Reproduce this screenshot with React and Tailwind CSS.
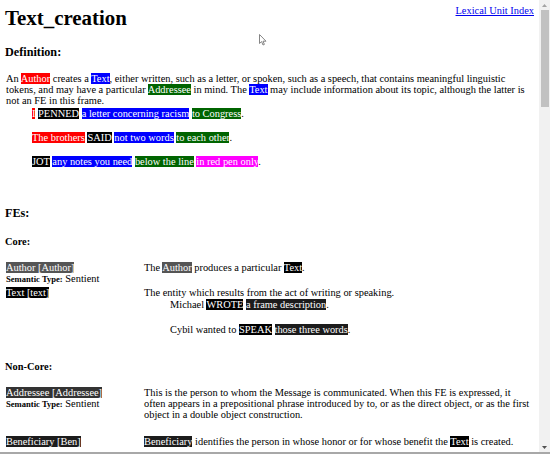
import React from 'react'

// FE highlight
function Hl({ c, children }) {
  return <span className={`${c} text-white`}>{children}</span>
}

const RED = 'bg-[#ff0000]'
const BLUE = 'bg-[#0000ff]'
const GREEN = 'bg-[#006400]'
const PINK = 'bg-[#ff00ff]'
const BLACK = 'bg-[#000000]'
const GRAY = 'bg-[#555555]'
const DARK = 'bg-[#333333]'
const DARKER = 'bg-[#1c1c1c]'

function Scrollbar() {
  return (
    <div className="w-[11px] shrink-0 bg-[#f1f1f1] flex flex-col items-center">
      <div className="h-[10px] w-full flex items-center justify-center">
        <svg width="5" height="3" viewBox="0 0 5 3">
          <path d="M0 3 L2.5 0 L5 3 Z" fill="#a3a3a3" />
        </svg>
      </div>
      <div className="w-[8px] h-[97px] bg-[#c1c1c1]" />
      <div className="flex-1" />
      <div className="h-[10px] w-full flex items-center justify-center">
        <svg width="5" height="3" viewBox="0 0 5 3">
          <path d="M0 0 L2.5 3 L5 0 Z" fill="#505050" />
        </svg>
      </div>
    </div>
  )
}

function FeRow({ label, semantic, children }) {
  return (
    <>
      <div className="pl-px">
        <div>{label}</div>
        {semantic && (
          <div>
            <b className="text-[8.6px]">Semantic Type:</b> Sentient
          </div>
        )}
      </div>
      <div className="pb-[11.5px]">{children}</div>
    </>
  )
}

export default function App() {
  return (
    <div className="relative h-[454px] w-[550px] overflow-hidden bg-white text-black font-['Liberation_Serif',serif] text-[10.4px] leading-[normal] flex flex-col">
      <div className="flex flex-1 min-h-0">
        <main className="flex-1 min-w-0 overflow-hidden px-[5px] pt-[5px]">
          {/* header */}
          <div className="flex items-start justify-between">
            <h1 className="mt-[1px] text-[20.9px] font-bold">Text_creation</h1>
            <a href="#" className="text-[#0000ee] underline">Lexical Unit Index</a>
          </div>

          <h3 className="mt-[14px] text-[12.2px] font-bold">Definition:</h3>

          <div className="mt-[12.6px] pl-[1px]">
            <p>
              An <Hl c={RED}>Author</Hl> creates a <Hl c={BLUE}>Text</Hl>, either written, such as a letter, or spoken, such as a speech, that contains meaningful linguistic tokens, and may have a particular <Hl c={GREEN}>Addressee</Hl> in mind. The <Hl c={BLUE}>Text</Hl> may include information about its topic, although the latter is not an FE in this frame.
            </p>
            <div className="mt-[2px] ml-[26px] flex flex-col gap-[13px]">
              <div>
                <Hl c={RED}>I</Hl> <Hl c={BLACK}>PENNED</Hl> <Hl c={BLUE}>a letter concerning racism</Hl> <Hl c={GREEN}>to Congress</Hl>.
              </div>
              <div>
                <Hl c={RED}>The brothers</Hl> <Hl c={BLACK}>SAID</Hl> <Hl c={BLUE}>not two words</Hl> <Hl c={GREEN}>to each other</Hl>.
              </div>
              <div>
                <Hl c={BLACK}>JOT</Hl> <Hl c={BLUE}>any notes you need</Hl> <Hl c={GREEN}>below the line</Hl> <Hl c={PINK}>in red pen only</Hl>.
              </div>
            </div>
          </div>

          <h3 className="mt-[39px] text-[12.2px] font-bold">FEs:</h3>

          <h4 className="mt-[15.6px] font-bold">Core:</h4>

          <div className="mt-[14.6px] grid grid-cols-[139px_1fr] gap-y-[3px]">
            <FeRow label={<Hl c={GRAY}>Author [Author]</Hl>} semantic>
              The <Hl c={GRAY}>Author</Hl> produces a particular <Hl c={BLACK}>Text</Hl>.
            </FeRow>
            <FeRow label={<Hl c={BLACK}>Text [text]</Hl>}>
              <div>The entity which results from the act of writing or speaking.</div>
              <div className="mt-[1px] ml-[26px] flex flex-col gap-[13.4px]">
                <div>
                  Michael <Hl c={BLACK}>WROTE</Hl> <Hl c={DARKER}>a frame description</Hl>.
                </div>
                <div>
                  Cybil wanted to <Hl c={BLACK}>SPEAK</Hl> <Hl c={DARKER}>those three words</Hl>.
                </div>
              </div>
            </FeRow>
          </div>

          <h4 className="mt-[15px] font-bold">Non-Core:</h4>

          <div className="mt-[14.5px] grid grid-cols-[139px_1fr] gap-y-[5px]">
            <FeRow label={<Hl c={DARK}>Addressee [Addressee]</Hl>} semantic>
              This is the person to whom the Message is communicated. When this FE is expressed, it often appears in a prepositional phrase introduced by to, or as the direct object, or as the first object in a double object construction.
            </FeRow>
            <FeRow label={<Hl c={DARKER}>Beneficiary [Ben]</Hl>}>
              <Hl c={DARKER}>Beneficiary</Hl> identifies the person in whose honor or for whose benefit the <Hl c={BLACK}>Text</Hl> is created.
            </FeRow>
          </div>
        </main>
        <Scrollbar />
      </div>
      <div className="h-[2px] shrink-0 bg-[#a8a8a8]" />

      {/* mouse pointer */}
      <svg className="absolute left-[259px] top-[34px]" width="8" height="12" viewBox="0 0 8 12">
        <path d="M0.5 0.5 L0.5 9.5 L2.6 7.6 L4 11 L5.4 10.4 L4 7.2 L7 7.2 Z" fill="#fff" stroke="#777" strokeWidth="0.9" strokeLinejoin="round" />
      </svg>
    </div>
  )
}
